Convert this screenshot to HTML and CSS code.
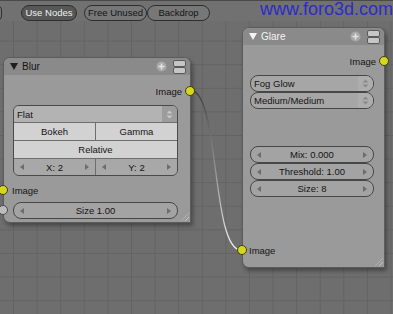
FILE: index.html
```html
<!DOCTYPE html>
<html lang="en">
<head>
    <meta charset="UTF-8">
    <title>Node Editor</title>
    <link rel="stylesheet" href="styles.css">
</head>
<body>
    <div class="editor">
        <div class="topbar">
            <span class="btn stub"></span>
            <button class="btn btn-on">Use Nodes</button>
            <div class="btn-group">
                <button class="btn">Free Unused</button>
                <button class="btn">Backdrop</button>
            </div>
            <span class="watermark">www.foro3d.com</span>
        </div>

        <svg class="links" width="393" height="314">
            <defs>
                <linearGradient id="wire" gradientUnits="userSpaceOnUse" x1="190" y1="90" x2="241" y2="250">
                    <stop offset="0" stop-color="#3a3a3a"/>
                    <stop offset="1" stop-color="#f2f2f2"/>
                </linearGradient>
            </defs>
            <path d="M190 90 C220 90 211 250 241 250" fill="none" stroke="url(#wire)" stroke-width="1.3"/>
        </svg>

        <!-- Blur node -->
        <div class="node node-blur">
            <div class="node-head">
                <span class="toggle"></span>
                <span class="title">Blur</span>
                <svg class="ico-plus" width="11" height="11" viewBox="0 0 11 11">
                    <circle cx="5.5" cy="5.5" r="5" fill="#a8a8a8"/>
                    <path d="M5.5 2.5v6M2.5 5.5h6" stroke="#e4e4e4" stroke-width="1.6"/>
                </svg>
                <svg class="ico-bars" width="13" height="14" viewBox="0 0 13 14">
                    <rect x="0.5" y="0.5" width="12" height="6" rx="1.5" fill="#c6c6c6" stroke="#5a5a5a"/>
                    <rect x="0.5" y="7.5" width="12" height="6" rx="1.5" fill="#c6c6c6" stroke="#5a5a5a"/>
                </svg>
            </div>
            <div class="node-body">
                <div class="socket-row out">
                    <span>Image</span>
                    <span class="socket"></span>
                </div>
                <div class="wbox">
                    <div class="wrow select">
                        <span class="sel-text">Flat</span>
                        <span class="spin dark">
                            <svg width="7" height="9" viewBox="0 0 7 9"><path d="M3.5 0.5L6.5 3.5H0.5ZM3.5 8.5L6.5 5.5H0.5Z" fill="#c8c8c8"/></svg>
                        </span>
                    </div>
                    <div class="wrow light">
                        <span class="cell">Bokeh</span>
                        <span class="cell">Gamma</span>
                    </div>
                    <div class="wrow light">
                        <span class="cell">Relative</span>
                    </div>
                    <div class="wrow num">
                        <span class="cell arrows">X: 2</span>
                        <span class="cell arrows">Y: 2</span>
                    </div>
                </div>
                <div class="socket-row in">
                    <span class="socket"></span>
                    <span>Image</span>
                </div>
                <div class="socket-row in param">
                    <span class="socket grey"></span>
                    <span class="field arrows">Size 1.00</span>
                </div>
            </div>
        </div>

        <!-- Glare node -->
        <div class="node node-glare">
            <div class="node-head">
                <span class="toggle"></span>
                <span class="title">Glare</span>
                <svg class="ico-plus" width="11" height="11" viewBox="0 0 11 11">
                    <circle cx="5.5" cy="5.5" r="5" fill="#a8a8a8"/>
                    <path d="M5.5 2.5v6M2.5 5.5h6" stroke="#e4e4e4" stroke-width="1.6"/>
                </svg>
                <svg class="ico-bars" width="13" height="14" viewBox="0 0 13 14">
                    <rect x="0.5" y="0.5" width="12" height="6" rx="1.5" fill="#c6c6c6" stroke="#5a5a5a"/>
                    <rect x="0.5" y="7.5" width="12" height="6" rx="1.5" fill="#c6c6c6" stroke="#5a5a5a"/>
                </svg>
            </div>
            <div class="node-body">
                <div class="socket-row out">
                    <span>Image</span>
                    <span class="socket"></span>
                </div>
                <div class="stack menus">
                    <div class="field select">
                        <span class="sel-text">Fog Glow</span>
                        <span class="spin">
                            <svg width="7" height="9" viewBox="0 0 7 9"><path d="M3.5 0.5L6.5 3.5H0.5ZM3.5 8.5L6.5 5.5H0.5Z" fill="#8a8a8a"/></svg>
                        </span>
                    </div>
                    <div class="field select">
                        <span class="sel-text">Medium/Medium</span>
                        <span class="spin">
                            <svg width="7" height="9" viewBox="0 0 7 9"><path d="M3.5 0.5L6.5 3.5H0.5ZM3.5 8.5L6.5 5.5H0.5Z" fill="#8a8a8a"/></svg>
                        </span>
                    </div>
                </div>
                <div class="stack sliders">
                    <span class="field arrows">Mix: 0.000</span>
                    <span class="field arrows">Threshold: 1.00</span>
                    <span class="field arrows">Size: 8</span>
                </div>
                <div class="socket-row in last">
                    <span class="socket"></span>
                    <span>Image</span>
                </div>
            </div>
        </div>
    </div>
</body>
</html>
```

FILE: styles.css
```css
body {
    margin: 0;
    font-family: 'Liberation Sans', Arial, sans-serif;
    font-size: 9.5px;
    color: #141414;
}
.editor {
    position: relative;
    width: 393px;
    height: 314px;
    overflow: hidden;
    background-color: #6e6e6e;
    background-image:
        linear-gradient(90deg, #636363 1px, transparent 1px),
        linear-gradient(#636363 1px, transparent 1px);
    background-size: 23.6px 23.6px;
    background-position: 13px 17px;
}
/* header buttons */
.topbar {
    display: flex;
    align-items: flex-start;
    height: 21px;
    box-sizing: border-box;
    padding-top: 4px;
    background-color: #717171;
    border-top: 1px solid #4a4a4a;
}
.btn {
    display: block;
    height: 16px;
    box-sizing: border-box;
    padding: 0;
    border: 1px solid #2e2e2e;
    border-radius: 8px;
    background-color: #777;
    font: inherit;
    line-height: 14px;
    color: #141414;
    text-align: center;
    width: 63px;
}
.stub {
    width: 10px;
    margin-left: -8px;
}
.btn-on {
    width: 56px;
    margin-left: 19px;
    background-color: #575757;
    color: #f0f0f0;
}
.btn-group {
    display: flex;
    margin-left: 7px;
}
.watermark {
    margin-left: auto;
    margin-top: -5px;
    font-size: 18px;
    line-height: 18px;
    color: #2c2cc8;
    white-space: nowrap;
}
.links {
    position: absolute;
    left: 0;
    top: 0;
}
/* nodes */
.node {
    position: absolute;
    display: flex;
    flex-direction: column;
    box-sizing: border-box;
    background-color: #9a9a9a;
    border: 1px solid #5c5c5c;
    border-radius: 7px 7px 0 7px;
    box-shadow: 2px 3px 4px rgba(0, 0, 0, 0.35);
}
.node::after {
    content: '';
    position: absolute;
    right: 1px;
    bottom: 1px;
    width: 8px;
    height: 8px;
    background: repeating-linear-gradient(135deg, transparent 0 2px, #c4c4c4 2px 3px);
    clip-path: polygon(100% 0, 100% 100%, 0 100%);
}
.node-blur {
    left: 3px;
    top: 57px;
    width: 188px;
    height: 166px;
}
.node-glare {
    left: 242px;
    top: 27px;
    width: 143px;
    height: 241px;
}
.node-head {
    display: flex;
    align-items: center;
    gap: 4px;
    height: 17px;
    padding: 0 4px 0 6px;
    background-color: #8a8a8a;
    border-radius: 6px 6px 0 0;
}
.toggle {
    width: 0;
    height: 0;
    border-left: 4px solid transparent;
    border-right: 4px solid transparent;
    border-top: 7px solid #1e1e1e;
}
.title {
    flex: 1;
    font-size: 10px;
}
.ico-plus {
    margin-right: 2px;
}
.node-glare .node-head {
    color: #f4f4f4;
}
.node-glare .toggle {
    border-top-color: #f4f4f4;
}
.node-body {
    display: flex;
    flex-direction: column;
    flex: 1;
    padding-top: 8px;
}
/* sockets */
.socket-row {
    position: relative;
    display: flex;
    align-items: center;
    height: 16px;
}
.socket-row.out {
    justify-content: flex-end;
    padding-right: 8px;
}
.socket-row.in {
    margin-top: 6px;
    padding-left: 8px;
}
.socket {
    position: absolute;
    top: 3px;
    width: 10px;
    height: 10px;
    box-sizing: border-box;
    border-radius: 50%;
    background-color: #d6d61e;
    border: 1px solid #3e3e16;
}
.out .socket {
    right: -5px;
}
.in .socket {
    left: -6px;
}
.socket.grey {
    background-color: #bdbdbd;
    border-color: #4a4a4a;
}
.socket-row.param {
    height: 17px;
    margin-top: 4px;
    padding: 0 12px 0 9px;
}
.socket-row.param .field {
    flex: 1;
}
/* widget blocks */
.wbox {
    margin: 6px 12px 0 9px;
    border: 1px solid #4a4a4a;
    border-radius: 6px;
    overflow: hidden;
}
.wrow {
    display: flex;
    height: 17px;
    border-top: 1px solid #6e6e6e;
}
.wrow:first-child,
.wrow:last-child {
    height: 16px;
}
.wrow:first-child {
    border-top: none;
}
.wrow.select {
    background-color: #b3b3b3;
    align-items: center;
}
.wrow.light {
    background-color: #d2d2d2;
}
.wrow.num {
    background-color: #a8a8a8;
}
.cell {
    position: relative;
    flex: 1;
    display: flex;
    align-items: center;
    justify-content: center;
}
.cell + .cell {
    border-left: 1px solid #6e6e6e;
}
.sel-text {
    flex: 1;
    padding-left: 3px;
}
.spin {
    display: flex;
    align-items: center;
    justify-content: center;
    width: 15px;
    align-self: stretch;
}
.spin.dark {
    background-color: #9c9c9c;
}
.field {
    position: relative;
    display: flex;
    align-items: center;
    justify-content: center;
    height: 17px;
    box-sizing: border-box;
    border: 1px solid #474747;
    border-radius: 8px;
    background-color: #a3a3a3;
    overflow: hidden;
}
.field.select {
    justify-content: flex-start;
    background-color: #a6a6a6;
}
.field.select .spin {
    background-color: #adadad;
}
.stack {
    display: flex;
    flex-direction: column;
    margin: 6px 10px 0 7px;
}
.stack.sliders {
    margin-top: 37px;
}
.socket-row.in.last {
    margin-top: auto;
    margin-bottom: 9px;
    padding-left: 6px;
}
/* number arrows */
.arrows::before,
.arrows::after {
    content: '';
    position: absolute;
    top: 50%;
    margin-top: -3px;
    border-top: 3px solid transparent;
    border-bottom: 3px solid transparent;
}
.arrows::before {
    left: 6px;
    border-right: 4px solid #6c6c6c;
}
.arrows::after {
    right: 6px;
    border-left: 4px solid #6c6c6c;
}
```
